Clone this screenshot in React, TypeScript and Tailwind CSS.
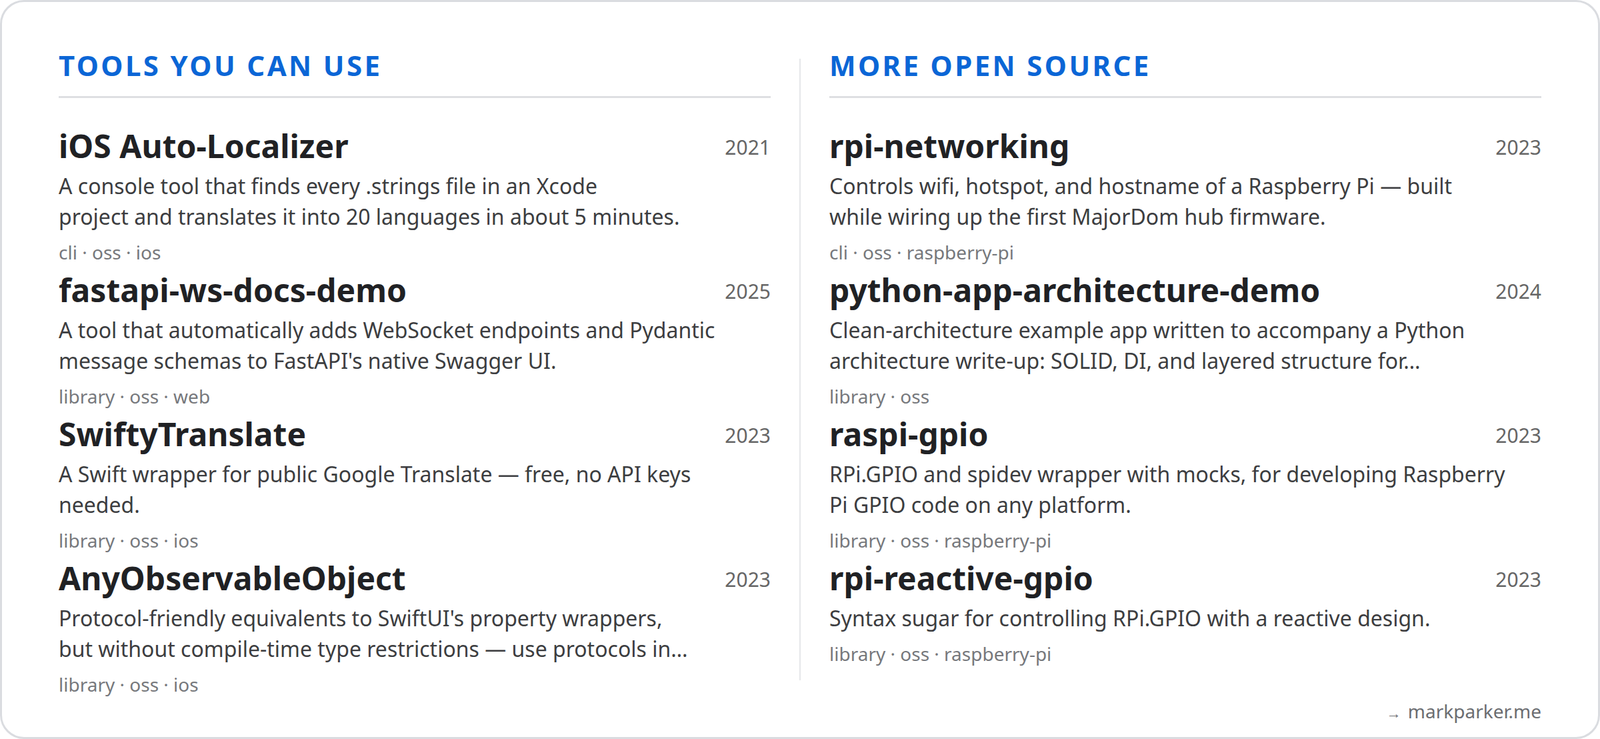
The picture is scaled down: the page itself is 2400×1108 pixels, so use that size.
const left = [
  { t: "iOS Auto-Localizer", y: "2021", d: <>A console tool that finds every .strings file in an Xcode<br />project and translates it into 20 languages in about 5 minutes.</>, tags: "cli · oss · ios" },
  { t: "fastapi-ws-docs-demo", y: "2025", d: <>A tool that automatically adds WebSocket endpoints and Pydantic<br />message schemas to FastAPI's native Swagger UI.</>, tags: "library · oss · web" },
  { t: "SwiftyTranslate", y: "2023", d: <>A Swift wrapper for public Google Translate — free, no API keys<br />needed.</>, tags: "library · oss · ios" },
  { t: "AnyObservableObject", y: "2023", d: <>Protocol-friendly equivalents to SwiftUI's property wrappers,<br />but without compile-time type restrictions — use protocols in…</>, tags: "library · oss · ios" },
];

const right = [
  { t: "rpi-networking", y: "2023", d: <>Controls wifi, hotspot, and hostname of a Raspberry Pi — built<br />while wiring up the first MajorDom hub firmware.</>, tags: "cli · oss · raspberry-pi" },
  { t: "python-app-architecture-demo", y: "2024", d: <>Clean-architecture example app written to accompany a Python<br />architecture write-up: SOLID, DI, and layered structure for…</>, tags: "library · oss" },
  { t: "raspi-gpio", y: "2023", d: <>RPi.GPIO and spidev wrapper with mocks, for developing Raspberry<br />Pi GPIO code on any platform.</>, tags: "library · oss · raspberry-pi" },
  { t: "rpi-reactive-gpio", y: "2023", d: <>Syntax sugar for controlling RPi.GPIO with a reactive design.</>, tags: "library · oss · raspberry-pi" },
];

type Item = { t: string; y: string; d: React.ReactNode; tags: string };

function Column({ title, items }: { title: string; items: Item[] }) {
  return (
    <div className="flex flex-col">
      <h2 className="text-[42px] leading-[50px] font-bold tracking-[0.08em] text-[#0b66d6] pb-[21px] border-b-[3px] border-[#dedfe2]">
        {title}
      </h2>
      <div className="flex flex-col gap-[8px] mt-[43px]">
        {items.map((it) => (
          <div key={it.t} className="flex flex-col">
            <div className="flex items-center justify-between">
              <span className="text-[48px] leading-[58px] font-bold text-[#202124]">{it.t}</span>
              <span className="text-[30px] text-[#666] pt-[2px]">{it.y}</span>
            </div>
            <p className="mt-[8px] text-[32px] leading-[46px] text-[#3c3d40]">{it.d}</p>
            <div className="mt-[10px] text-[28px] leading-[40px] text-[#76787c]">{it.tags}</div>
          </div>
        ))}
      </div>
    </div>
  );
}

export default function App() {
  return (
    <div className="w-[2400px] h-[1108px] bg-white font-['Liberation_Sans',Arial,sans-serif]">
      <div className="h-full border-[3px] border-[#dadce0] rounded-[36px] px-[85px] pt-[70px] flex flex-col">
        <div className="grid grid-cols-[1fr_2px_1fr] gap-x-[43px]">
          <Column title="TOOLS YOU CAN USE" items={left} />
          <div className="bg-[#e6e7ea] mt-[15px] mb-[26px]" />
          <Column title="MORE OPEN SOURCE" items={right} />
        </div>
        <div className="text-right text-[28px] leading-[40px] text-[#6b6d71]">
          <span className="text-[22px] mr-[10px]">→</span>markparker.me
        </div>
      </div>
    </div>
  );
}
